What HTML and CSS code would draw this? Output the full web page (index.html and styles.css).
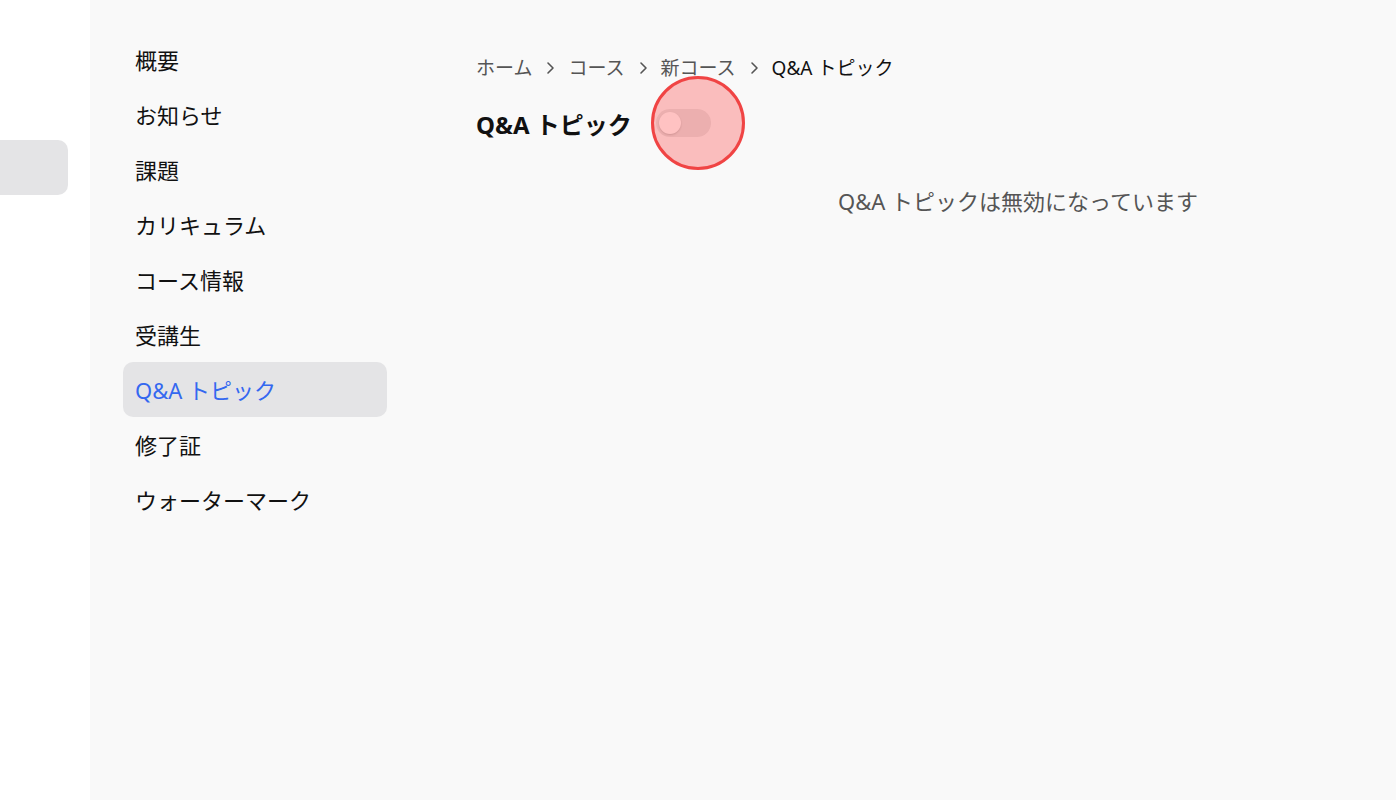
FILE: index.html
```html
<!DOCTYPE html>
<html lang="ja">
<head>
    <meta charset="UTF-8">
    <meta name="viewport" content="width=device-width, initial-scale=1.0">
    <title>Q&amp;A トピック</title>
    <link rel="stylesheet" href="styles.css">
</head>
<body>
    <div class="rail">
        <div class="rail-item"></div>
    </div>

    <div class="page">
        <nav class="side-nav">
            <a class="nav-item">概要</a>
            <a class="nav-item">お知らせ</a>
            <a class="nav-item">課題</a>
            <a class="nav-item">カリキュラム</a>
            <a class="nav-item">コース情報</a>
            <a class="nav-item">受講生</a>
            <a class="nav-item active">Q&amp;A トピック</a>
            <a class="nav-item">修了証</a>
            <a class="nav-item">ウォーターマーク</a>
        </nav>

        <main class="content">
            <div class="breadcrumb">
                <span class="crumb">ホーム</span>
                <svg class="sep" viewBox="0 0 10 14" width="10" height="14"><path d="M3 2l5 5-5 5" fill="none" stroke="#555" stroke-width="1.6" stroke-linecap="round" stroke-linejoin="round"/></svg>
                <span class="crumb">コース</span>
                <svg class="sep" viewBox="0 0 10 14" width="10" height="14"><path d="M3 2l5 5-5 5" fill="none" stroke="#555" stroke-width="1.6" stroke-linecap="round" stroke-linejoin="round"/></svg>
                <span class="crumb">新コース</span>
                <svg class="sep" viewBox="0 0 10 14" width="10" height="14"><path d="M3 2l5 5-5 5" fill="none" stroke="#555" stroke-width="1.6" stroke-linecap="round" stroke-linejoin="round"/></svg>
                <span class="crumb current">Q&amp;A トピック</span>
            </div>

            <div class="title-row">
                <h1>Q&amp;A トピック</h1>
                <div class="toggle-wrap">
                    <div class="toggle"><div class="knob"></div></div>
                    <div class="highlight"></div>
                </div>
            </div>

            <p class="empty">Q&amp;A トピックは無効になっています</p>
        </main>
    </div>
</body>
</html>
```

FILE: styles.css
```css
/* Base */
body {
    margin: 0;
    font-family: "Noto Sans", "Noto Sans CJK JP", sans-serif;
    color: #111;
    background: #fff;
    display: flex;
    height: 100vh;
    overflow: hidden;
}

/* Left icon rail */
.rail {
    width: 90px;
    flex-shrink: 0;
    background: #fff;
    padding-top: 140px;
}

.rail-item {
    width: 68px;
    height: 55px;
    background: #e4e4e6;
    border-radius: 0 10px 10px 0;
}

/* Main page area */
.page {
    flex: 1;
    background: #f9f9f9;
    display: flex;
}

.side-nav {
    width: 264px;
    margin-left: 33px;
    padding-top: 32px;
    display: flex;
    flex-direction: column;
    flex-shrink: 0;
}

.nav-item {
    height: 55px;
    display: flex;
    align-items: center;
    padding-left: 12px;
    font-size: 22px;
    line-height: 1;
    color: #111;
    border-radius: 10px;
    cursor: pointer;
}

.nav-item.active {
    background: #e4e4e6;
    color: #3468f0;
}

.content {
    flex: 1;
    margin-left: 89px;
    padding-top: 54px;
}

/* Breadcrumb */
.breadcrumb {
    display: flex;
    align-items: center;
    gap: 13px;
    font-size: 19px;
    color: #555;
    line-height: 28px;
}

.crumb.current {
    color: #111;
}

/* Title row */
.title-row {
    display: flex;
    align-items: center;
    margin-top: 26px;
    height: 30px;
}

h1 {
    font-size: 24px;
    font-weight: bold;
    margin: 0;
    color: #111;
}

.toggle-wrap {
    position: relative;
    margin-left: 24px;
}

.toggle {
    width: 55px;
    height: 28px;
    border-radius: 14px;
    background: #e6e6e6;
    padding: 3px;
    box-sizing: border-box;
}

.knob {
    width: 22px;
    height: 22px;
    border-radius: 50%;
    background: #fff;
    box-shadow: 0 1px 2px rgba(0, 0, 0, 0.15);
}

/* Click marker over the toggle */
.highlight {
    position: absolute;
    left: -5px;
    top: -33px;
    width: 88px;
    height: 88px;
    border-radius: 50%;
    border: 3px solid #f04444;
    background: rgba(255, 0, 0, 0.24);
}

/* Empty state */
.empty {
    text-align: center;
    font-size: 22px;
    color: #555;
    margin: 46px 0 0;
    padding-left: 164px;
}
```
